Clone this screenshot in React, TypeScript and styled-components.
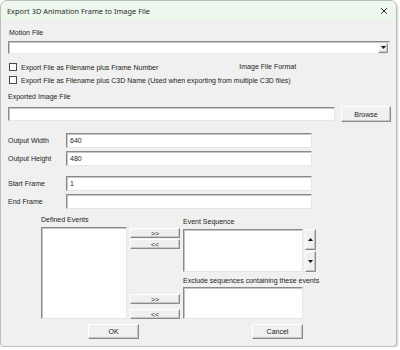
import React from "react";
import styled, { createGlobalStyle } from "styled-components";

const Global = createGlobalStyle`
  html, body { margin: 0; padding: 0; background: #ffffff; }
  body { font-family: "Liberation Sans", Arial, sans-serif; }
  * { box-sizing: border-box; }
`;

const Window = styled.div`
  width: 397px;
  height: 347px;
  background: #f0f0f0;
  border: 1px solid #bdbdbd;
  border-radius: 7px 7px 4px 4px;
  box-shadow: 1px 1px 2px rgba(0,0,0,0.18);
  overflow: hidden;
  display: flex;
  flex-direction: column;
  font-size: 7px;
  color: #1c1c1c;
`;

const TitleBar = styled.div`
  height: 19px;
  background: #edf7ed;
  display: flex;
  align-items: center;
  justify-content: space-between;
  padding: 0 6px 0 6px;
  font-family: "Noto Sans", "Open Sans", sans-serif;
  font-size: 7.4px;
  font-weight: 400;
  color: #2a2a2a;
`;

const Body = styled.div`
  display: flex;
  flex-direction: column;
  padding-left: 7px;
`;

const Label = styled.div<{ $mt?: number; $ml?: number }>`
  height: 10px;
  line-height: 10px;
  margin-top: ${p => p.$mt ?? 0}px;
  margin-left: ${p => p.$ml ?? 0}px;
  white-space: nowrap;
`;

const Sunken = styled.div<{ $w: number; $h: number; $mt?: number }>`
  width: ${p => p.$w}px;
  height: ${p => p.$h}px;
  margin-top: ${p => p.$mt ?? 0}px;
  background: #ffffff;
  border: 1px solid;
  border-color: #8a8a8a #e6e6e6 #e6e6e6 #8a8a8a;
  box-shadow: inset 1px 1px 0 #c6c6c6;
  display: flex;
  align-items: center;
  padding-left: 3px;
  flex-shrink: 0;
`;

const Combo = styled(Sunken)`
  justify-content: flex-end;
  padding: 1px;
`;

const Raised = styled.div<{ $w: number; $h: number; $mt?: number; $ml?: number }>`
  width: ${p => p.$w}px;
  height: ${p => p.$h}px;
  margin-top: ${p => p.$mt ?? 0}px;
  margin-left: ${p => p.$ml ?? 0}px;
  background: #f0f0f0;
  border: 1px solid;
  border-color: #ffffff #8a8a8a #8a8a8a #ffffff;
  box-shadow: inset -1px -1px 0 #c8c8c8;
  display: flex;
  align-items: center;
  justify-content: center;
  font-size: 7px;
  line-height: 1;
  flex-shrink: 0;
  white-space: nowrap;
`;

const CheckRow = styled.div<{ $mt: number }>`
  display: flex;
  align-items: center;
  height: 10px;
  margin-top: ${p => p.$mt}px;
`;

const Box = styled.div`
  width: 8px;
  height: 8px;
  margin-left: 1px;
  margin-right: 4px;
  background: #fff;
  border: 1px solid #4a4a4a;
  flex-shrink: 0;
`;

const Row = styled.div<{ $mt: number; $h: number }>`
  display: flex;
  align-items: center;
  height: ${p => p.$h}px;
  margin-top: ${p => p.$mt}px;
`;

const FieldLabel = styled.div`
  width: 58px;
  white-space: nowrap;
`;

const Events = styled.div`
  display: flex;
  margin-top: 6px;
  margin-left: 33px;
`;

const Col = styled.div<{ $pt?: number; $ml?: number }>`
  display: flex;
  flex-direction: column;
  padding-top: ${p => p.$pt ?? 0}px;
  margin-left: ${p => p.$ml ?? 0}px;
`;

const SeqRow = styled.div`
  display: flex;
  margin-top: 2px;
`;

const Spin = styled.div`
  display: flex;
  flex-direction: column;
  margin-left: 2px;
  gap: 1px;
`;

const Footer = styled.div`
  display: flex;
  margin-top: 5px;
`;

const Tri = ({ up }: { up?: boolean }) => (
  <svg width="5" height="3" viewBox="0 0 5 3">
    <polygon points={up ? "0,3 5,3 2.5,0" : "0,0 5,0 2.5,3"} fill="#111" />
  </svg>
);

export default function App() {
  return (
    <>
      <Global />
      <Window>
        <TitleBar>
          <span>Export 3D Animation Frame to Image File</span>
          <svg width="8" height="8" viewBox="0 0 8 8" style={{ marginRight: 2 }}>
            <path d="M1 1 L7 7 M7 1 L1 7" stroke="#333" strokeWidth="1" />
          </svg>
        </TitleBar>
        <Body>
          <Label $mt={8} $ml={1}>Motion File</Label>
          <Combo $w={382} $h={13} $mt={3}>
            <Raised $w={10} $h={10}><Tri /></Raised>
          </Combo>
          <CheckRow $mt={8}>
            <Box />
            <span>Export File as Filename plus Frame Number</span>
            <Label $ml={81}>Image File Format</Label>
          </CheckRow>
          <CheckRow $mt={3}>
            <Box />
            <span>Export File as Filename plus C3D Name (Used when exporting from multiple C3D files)</span>
          </CheckRow>
          <Label $mt={7}>Exported Image File</Label>
          <Row $mt={4} $h={16}>
            <Sunken $w={327} $h={14} />
            <Raised $w={50} $h={16} $ml={6}>Browse</Raised>
          </Row>
          <Row $mt={11} $h={15}>
            <FieldLabel>Output Width</FieldLabel>
            <Sunken $w={246} $h={15}>640</Sunken>
          </Row>
          <Row $mt={3} $h={15}>
            <FieldLabel>Output Height</FieldLabel>
            <Sunken $w={246} $h={15}>480</Sunken>
          </Row>
          <Row $mt={10} $h={15}>
            <FieldLabel>Start Frame</FieldLabel>
            <Sunken $w={246} $h={15}>1</Sunken>
          </Row>
          <Row $mt={3} $h={15}>
            <FieldLabel>End Frame</FieldLabel>
            <Sunken $w={246} $h={15} />
          </Row>
          <Events>
            <Col>
              <Label>Defined Events</Label>
              <Sunken $w={86} $h={92} $mt={2} />
            </Col>
            <Col $pt={13} $ml={3}>
              <Raised $w={50} $h={10}>&gt;&gt;</Raised>
              <Raised $w={50} $h={10} $mt={1}>&lt;&lt;</Raised>
              <Raised $w={50} $h={10} $mt={45}>&gt;&gt;</Raised>
              <Raised $w={50} $h={10} $mt={5}>&lt;&lt;</Raised>
            </Col>
            <Col $ml={3}>
              <Label $mt={2}>Event Sequence</Label>
              <SeqRow>
                <Sunken $w={120} $h={43} />
                <Spin>
                  <Raised $w={11} $h={21}><Tri up /></Raised>
                  <Raised $w={11} $h={21}><Tri /></Raised>
                </Spin>
              </SeqRow>
              <Label $mt={4}>Exclude sequences containing these events</Label>
              <Sunken $w={120} $h={32} $mt={1} />
            </Col>
          </Events>
          <Footer>
            <Raised $w={51} $h={15} $ml={80}>OK</Raised>
            <Raised $w={51} $h={15} $ml={113}>Cancel</Raised>
          </Footer>
        </Body>
      </Window>
    </>
  );
}
